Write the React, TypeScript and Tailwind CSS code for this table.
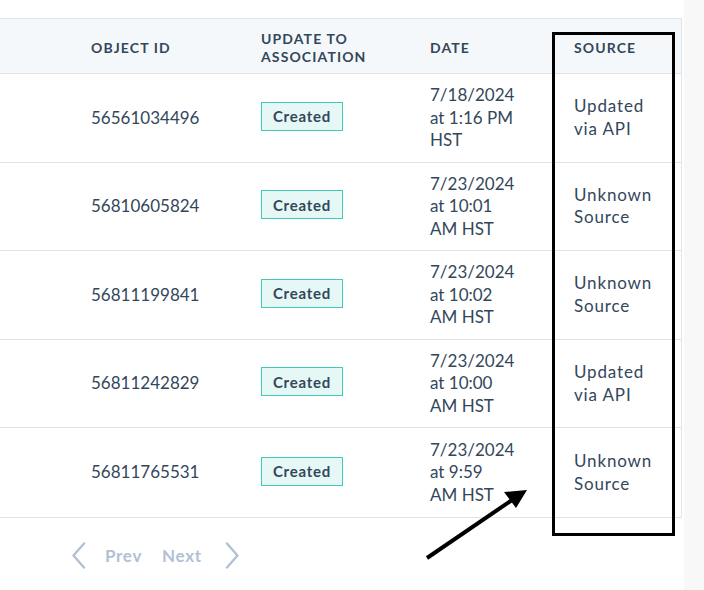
type Row = {
  id: string;
  date: string[];
  source: string[];
};

const rows: Row[] = [
  { id: "56561034496", date: ["7/18/2024", "at 1:16 PM", "HST"], source: ["Updated", "via API"] },
  { id: "56810605824", date: ["7/23/2024", "at 10:01", "AM HST"], source: ["Unknown", "Source"] },
  { id: "56811199841", date: ["7/23/2024", "at 10:02", "AM HST"], source: ["Unknown", "Source"] },
  { id: "56811242829", date: ["7/23/2024", "at 10:00", "AM HST"], source: ["Updated", "via API"] },
  { id: "56811765531", date: ["7/23/2024", "at 9:59", "AM HST"], source: ["Unknown", "Source"] },
];

const cols = "grid grid-cols-[91px_170px_169px_144px_107px]";

function Chevron({ dir }: { dir: "left" | "right" }) {
  return (
    <svg width="16" height="27" viewBox="0 0 16 27" fill="none">
      <polyline
        points={dir === "left" ? "13,1.5 2.5,13.5 13,25.5" : "3,1.5 13.5,13.5 3,25.5"}
        stroke="#b0c1d4"
        strokeWidth="2.4"
        strokeLinecap="round"
        strokeLinejoin="round"
      />
    </svg>
  );
}

export default function App() {
  return (
    <div
      className="relative flex w-[704px] h-[590px] bg-white text-[#33475b] overflow-hidden"
      style={{ fontFamily: "Lato, 'Noto Sans', sans-serif" }}
    >
      <div className="w-[684px] pt-[18px]">
        {/* ── Table ── */}
        <div className="w-[682px] border-t border-r border-b border-[#dfe3eb]">
          {/* Header */}
          <div className={`${cols} h-[55px] pt-[4px] bg-[#f5f8fa] border-b border-[#dfe3eb] items-center text-[14px] font-bold tracking-[0.08em] leading-[18px]`}>
            <div />
            <div>OBJECT ID</div>
            <div>
              UPDATE TO
              <br />
              ASSOCIATION
            </div>
            <div>DATE</div>
            <div>SOURCE</div>
          </div>

          {/* Body rows */}
          {rows.map((row, i) => (
            <div
              key={row.id}
              className={`${cols} h-[88.6px] items-center text-[17px] leading-[22.5px] ${
                i < rows.length - 1 ? "border-b border-[#dfe3eb]" : ""
              }`}
            >
              <div />
              <div>{row.id}</div>
              <div>
                <span className="inline-flex items-center justify-center w-[82px] h-[29px] -mt-[8px] bg-[#e5f8f6] border-[1.5px] border-[#3fcbb8] text-[15px] font-bold tracking-[0.05em]">
                  Created
                </span>
              </div>
              <div>
                {row.date.map((l) => (
                  <div key={l}>{l}</div>
                ))}
              </div>
              <div className="tracking-[0.05em]">
                {row.source.map((l) => (
                  <div key={l}>{l}</div>
                ))}
              </div>
            </div>
          ))}
        </div>

        {/* ── Pagination ── */}
        <div className="flex items-center h-[40px] mt-[18px] pl-[71px] text-[#b0c1d4] text-[17px] font-bold tracking-[0.04em]">
          <Chevron dir="left" />
          <span className="ml-[18px]">Prev</span>
          <span className="ml-[20px]">Next</span>
          <span className="ml-[22px]">
            <Chevron dir="right" />
          </span>
        </div>
      </div>

      {/* right page gutter */}
      <div className="flex-1 bg-[#f8f8f8]" />

      {/* ── Annotation box ── */}
      <div className="absolute left-[552px] top-[32px] w-[123px] h-[504px] border-[3.5px] border-black pointer-events-none" />

      {/* ── Annotation arrow ── */}
      <svg
        className="absolute left-[420px] top-[480px] pointer-events-none"
        width="120"
        height="90"
        viewBox="0 0 120 90"
      >
        <line x1="7" y1="78" x2="92" y2="20" stroke="black" strokeWidth="4" />
        <polygon points="107,10 96,28 84,12" fill="black" />
      </svg>
    </div>
  );
}
